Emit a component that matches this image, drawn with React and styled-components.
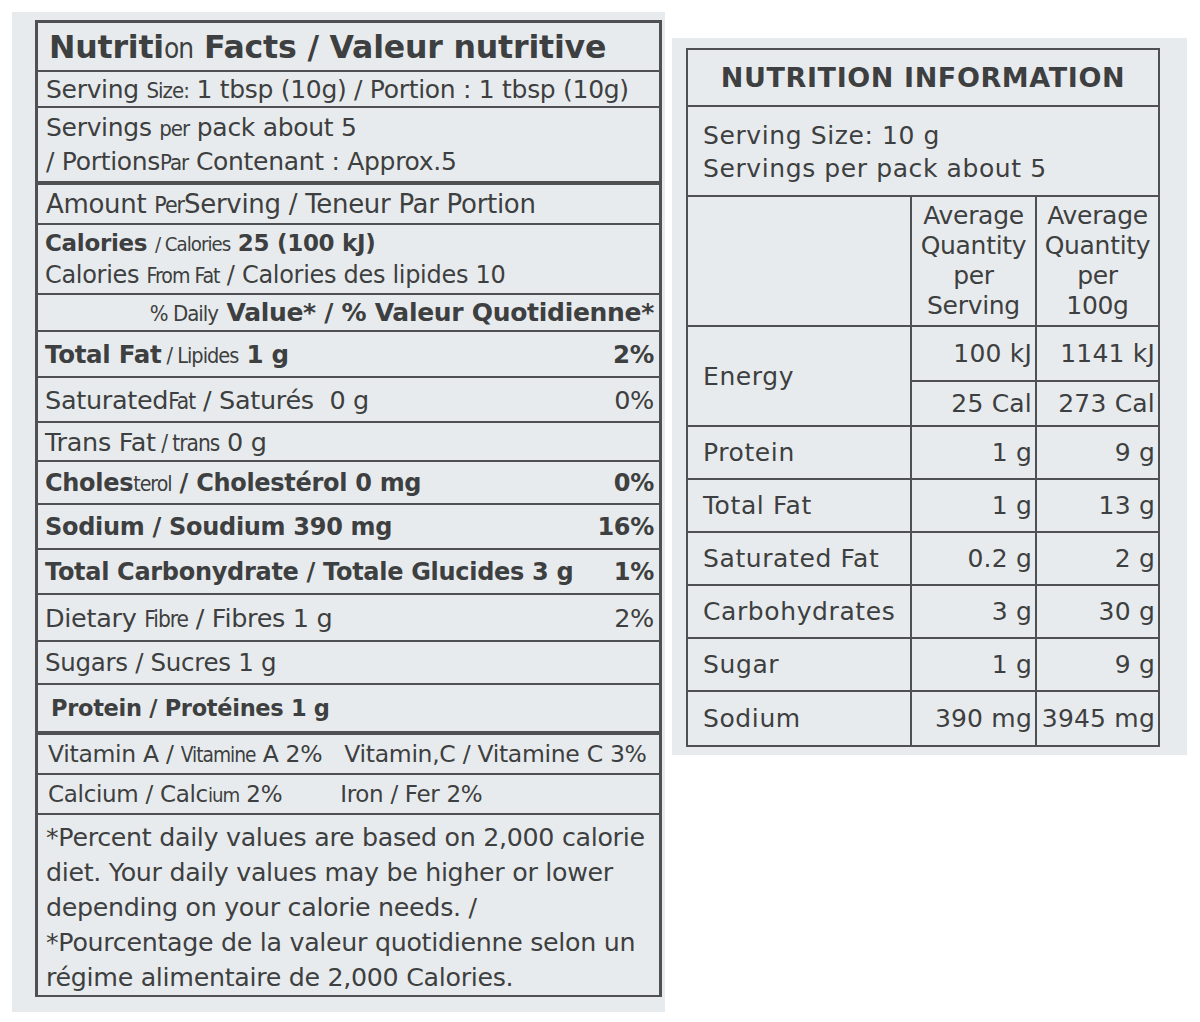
import React from 'react'
import styled, { createGlobalStyle } from 'styled-components'

const GlobalStyle = createGlobalStyle`
  body {
    margin: 0;
    background: #ffffff;
    font-family: 'DejaVu Sans', 'Liberation Sans', sans-serif;
    color: #3d3f40;
  }
`

const Page = styled.div`
  display: flex;
  align-items: flex-start;
  width: 1200px;
  height: 1022px;
  overflow: hidden;
`

const LeftPanel = styled.div`
  margin: 12px 0 0 12px;
  width: 653px;
  height: 1000px;
  box-sizing: border-box;
  padding: 8px 3px 0 23px;
  background: #e8ebed;
`

const Label = styled.div`
  border: 3px solid #4e5052;
  border-bottom-width: 2px;
  display: flex;
  flex-direction: column;
`

const Row = styled.div`
  box-sizing: border-box;
  height: ${(p) => p.$h}px;
  border-bottom: ${(p) => p.$thick ? 4 : 2}px solid #4e5052;
  display: flex;
  align-items: center;
  justify-content: ${(p) => p.$right ? 'flex-end' : 'space-between'};
  padding: 0 5px 0 ${(p) => p.$indent ?? 9}px;
  font-size: ${(p) => p.$size ?? 22}px;
  font-weight: ${(p) => p.$bold ? 700 : 400};
  white-space: pre;
  letter-spacing: ${(p) => p.$ls ?? -0.3}px;

  &:last-child {
    border-bottom: none;
  }
`

const Stack = styled.div`
  display: flex;
  flex-direction: column;
  line-height: ${(p) => p.$lh ?? 32}px;
`

const Line = styled.span`
  font-size: ${(p) => p.$size}px;
  font-weight: ${(p) => p.$bold ? 700 : 400};
`

const Tiny = styled.span`
  font-family: 'DejaVu Sans Condensed', 'Liberation Sans Narrow', 'DejaVu Sans', sans-serif;
  font-stretch: condensed;
  font-size: 0.88em;
  letter-spacing: -1px;
  font-weight: 400;
`

const Footnote = styled.p`
  margin: 0;
  padding: 5px 10px 0 8px;
  font-size: 25.3px;
  line-height: 35px;
  letter-spacing: -0.3px;
  white-space: nowrap;
`

const Gap = styled.span`
  display: inline-block;
  width: ${(p) => p.$w}px;
`

const RightPanel = styled.div`
  margin: 38px 0 0 7px;
  width: 515px;
  height: 717px;
  box-sizing: border-box;
  padding: 10px 0 0 14px;
  background: #e8ebed;
`

const InfoBox = styled.div`
  width: 474px;
  border: 2px solid #4e5052;
  box-sizing: border-box;
`

const InfoTitle = styled.div`
  height: 57px;
  box-sizing: border-box;
  border-bottom: 2px solid #4e5052;
  display: flex;
  align-items: center;
  justify-content: center;
  font-size: 27px;
  font-weight: 700;
  letter-spacing: 0.6px;
`

const ServingBlock = styled.div`
  height: 90px;
  box-sizing: border-box;
  border-bottom: 2px solid #4e5052;
  padding: 12px 0 0 15px;
  font-size: 25px;
  line-height: 33px;
  letter-spacing: 0.6px;
`

const Table = styled.div`
  display: grid;
  grid-template-columns: 224px 125px 1fr;
`

const Cell = styled.div`
  box-sizing: border-box;
  height: ${(p) => p.$h}px;
  border-right: ${(p) => p.$last ? 'none' : '2px solid #4e5052'};
  border-bottom: ${(p) => p.$end ? 'none' : '2px solid #4e5052'};
  grid-row: ${(p) => p.$span ? 'span 2' : 'auto'};
  display: flex;
  align-items: center;
  justify-content: ${(p) => p.$num ? 'flex-end' : 'flex-start'};
  padding: ${(p) => p.$num ? '0 3px 0 0' : '0 0 0 15px'};
  font-size: 25px;
  letter-spacing: ${(p) => p.$num ? '0.2px' : '0.6px'};
  white-space: nowrap;
`

const HeadCell = styled.div`
  box-sizing: border-box;
  height: 130px;
  border-right: ${(p) => p.$last ? 'none' : '2px solid #4e5052'};
  border-bottom: 2px solid #4e5052;
  display: flex;
  flex-direction: column;
  align-items: center;
  justify-content: center;
  font-size: 25px;
  line-height: 30px;
  letter-spacing: -0.3px;
  text-align: center;
`

const leftRows = [
  { h: 46, bold: true, size: 24.5, label: <>Total Fat<Tiny> / Lipides</Tiny> 1 g</>, pct: '2%' },
  { h: 45, size: 25.5, label: <>Saturated<Tiny>Fat</Tiny> / Saturés  0 g</>, pct: '0%' },
  { h: 39, size: 25.5, label: <>Trans Fat<Tiny> / trans</Tiny> 0 g</> },
  { h: 43, bold: true, size: 24, label: <>Choles<Tiny>terol</Tiny> / Cholestérol 0 mg</>, pct: '0%' },
  { h: 45, bold: true, size: 24, label: <>Sodium / Soudium 390 mg</>, pct: '16%' },
  { h: 45, bold: true, size: 24, label: <>Total Carbonydrate / Totale Glucides 3 g</>, pct: '1%' },
  { h: 47, size: 25.5, label: <>Dietary <Tiny>Fibre</Tiny> / Fibres 1 g</>, pct: '2%' },
  { h: 43, size: 24.5, label: <>Sugars / Sucres 1 g</> },
]

const infoRows = [
  { name: 'Protein', a: '1 g', b: '9 g' },
  { name: 'Total Fat', a: '1 g', b: '13 g' },
  { name: 'Saturated Fat', a: '0.2 g', b: '2 g' },
  { name: 'Carbohydrates', a: '3 g', b: '30 g' },
  { name: 'Sugar', a: '1 g', b: '9 g' },
  { name: 'Sodium', a: '390 mg', b: '3945 mg', end: true },
]

const App = () => {
  return (
    <Page>
      <GlobalStyle />
      <LeftPanel>
        <Label>
          <Row $h={49} $size={31.6} $bold $ls={-0.2} $indent={11}>
            <span>Nutriti<Tiny>on</Tiny> Facts / Valeur nutritive</span>
          </Row>
          <Row $h={36} $size={25} $indent={8}>
            <span>Serving <Tiny>Size:</Tiny> 1 tbsp (10g) / Portion : 1 tbsp (10g)</span>
          </Row>
          <Row $h={77} $thick $indent={8}>
            <Stack $lh={33}>
              <Line $size={25}>Servings <Tiny>per</Tiny> pack about 5</Line>
              <Line $size={25}>/ Portions<Tiny>Par</Tiny> Contenant : Approx.5</Line>
            </Stack>
          </Row>
          <Row $h={40} $size={26} $indent={8}>
            <span>Amount <Tiny>Per</Tiny>Serving / Teneur Par Portion</span>
          </Row>
          <Row $h={70} $indent={7}>
            <Stack $lh={31}>
              <Line $size={23} $bold>Calories <Tiny>/ Calories</Tiny> 25 (100 kJ)</Line>
              <Line $size={24}>Calories <Tiny>From Fat</Tiny> / Calories des lipides 10</Line>
            </Stack>
          </Row>
          <Row $h={37} $size={25} $bold $right>
            <span><Tiny>% Daily</Tiny> Value* / % Valeur Quotidienne*</span>
          </Row>
          {leftRows.map((r, i) => (
            <Row key={i} $h={r.h} $size={r.size} $bold={r.bold} $indent={7}>
              <span>{r.label}</span>
              {r.pct && <span>{r.pct}</span>}
            </Row>
          ))}
          <Row $h={50} $thick $size={22.5} $bold $indent={13}>
            <span>Protein / Protéines 1 g</span>
          </Row>
          <Row $h={40} $size={23.5} $indent={10}>
            <span>Vitamin A / <Tiny>Vitamine</Tiny> A 2%<Gap $w={22} />Vitamin,C / Vitamine C 3%</span>
          </Row>
          <Row $h={40} $size={23} $indent={10}>
            <span>Calcium / Calc<Tiny>ium</Tiny> 2%<Gap $w={58} />Iron / Fer 2%</span>
          </Row>
          <Footnote>
            *Percent daily values are based on 2,000 calorie<br />
            diet. Your daily values may be higher or lower<br />
            depending on your calorie needs. /<br />
            *Pourcentage de la valeur quotidienne selon un<br />
            régime alimentaire de 2,000 Calories.
          </Footnote>
        </Label>
      </LeftPanel>

      <RightPanel>
        <InfoBox>
          <InfoTitle>NUTRITION INFORMATION</InfoTitle>
          <ServingBlock>
            Serving Size: 10 g<br />
            Servings per pack about 5
          </ServingBlock>
          <Table>
            <HeadCell />
            <HeadCell>
              <span>Average</span><span>Quantity</span><span>per</span><span>Serving</span>
            </HeadCell>
            <HeadCell $last>
              <span>Average</span><span>Quantity</span><span>per</span><span>100g</span>
            </HeadCell>

            <Cell $h={100} $span>Energy</Cell>
            <Cell $h={55} $num>100 kJ</Cell>
            <Cell $h={55} $num $last>1141 kJ</Cell>
            <Cell $h={45} $num>25 Cal</Cell>
            <Cell $h={45} $num $last>273 Cal</Cell>

            {infoRows.map((r) => (
              <React.Fragment key={r.name}>
                <Cell $h={53} $end={r.end}>{r.name}</Cell>
                <Cell $h={53} $num $end={r.end}>{r.a}</Cell>
                <Cell $h={53} $num $last $end={r.end}>{r.b}</Cell>
              </React.Fragment>
            ))}
          </Table>
        </InfoBox>
      </RightPanel>
    </Page>
  )
}

export default App
